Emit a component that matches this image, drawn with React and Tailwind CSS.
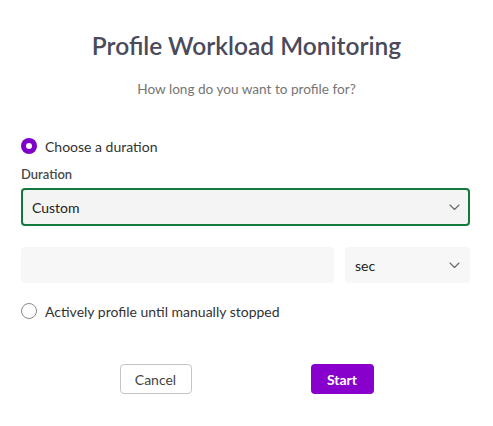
function Chevron() {
  return (
    <svg width="11" height="7" viewBox="0 0 11 7" fill="none" className="shrink-0">
      <path d="M1 1l4.5 4.5L10 1" stroke="#666" strokeWidth="1.1" strokeLinecap="round" strokeLinejoin="round" />
    </svg>
  );
}

function Radio({ checked, label }) {
  return (
    <label className="flex items-center gap-[8px] h-[20px] cursor-pointer">
      {checked ? (
        <span className="w-[16px] h-[16px] rounded-full bg-[#7f00c8] flex items-center justify-center">
          <span className="w-[6px] h-[6px] rounded-full bg-white" />
        </span>
      ) : (
        <span className="w-[16px] h-[16px] rounded-full border border-[#8a8a8a] bg-white" />
      )}
      <span className="text-[14px] text-[#333]">{label}</span>
    </label>
  );
}

export default function App() {
  return (
    <div className="w-[493px] h-[426px] bg-white px-[21px] pt-[30px] font-['Lato','Noto_Sans',sans-serif]">
      <h1 className="text-center text-[24.5px] leading-[32px] font-semibold text-[#4a4a5a]">
        Profile Workload Monitoring
      </h1>
      <p className="mt-[17px] text-center text-[13.6px] leading-[20px] text-[#757575]">
        How long do you want to profile for?
      </p>

      <div className="mt-[37px]">
        <Radio checked label="Choose a duration" />
      </div>

      <div className="mt-[9px] text-[13px] leading-[18px] font-semibold text-[#4a4a4a]">Duration</div>

      <div className="mt-[5px] h-[38px] w-[449px] rounded-[4px] border-2 border-[#137a3e] bg-[#f4f4f4] flex items-center justify-between pl-[9px] pr-[8px]">
        <span className="text-[14px] text-[#222]">Custom</span>
        <Chevron />
      </div>

      <div className="mt-[21px] flex gap-[11px] w-[449px]">
        <div className="h-[36px] flex-1 rounded-[4px] bg-[#f7f7f7]" />
        <div className="h-[36px] w-[125px] rounded-[4px] bg-[#f7f7f7] flex items-center justify-between pl-[10px] pr-[10px]">
          <span className="text-[14px] text-[#222]">sec</span>
          <Chevron />
        </div>
      </div>

      <div className="mt-[18px]">
        <Radio label="Actively profile until manually stopped" />
      </div>

      <div className="mt-[43px] flex justify-center gap-[119px] -mx-[21px]">
        <button className="h-[30px] w-[72px] rounded-[4px] border border-[#c4c4c4] bg-white text-[14px] text-[#444]">
          Cancel
        </button>
        <button className="h-[30px] w-[63px] rounded-[4px] bg-[#8800cc] text-[14px] font-bold text-white">
          Start
        </button>
      </div>
    </div>
  );
}
